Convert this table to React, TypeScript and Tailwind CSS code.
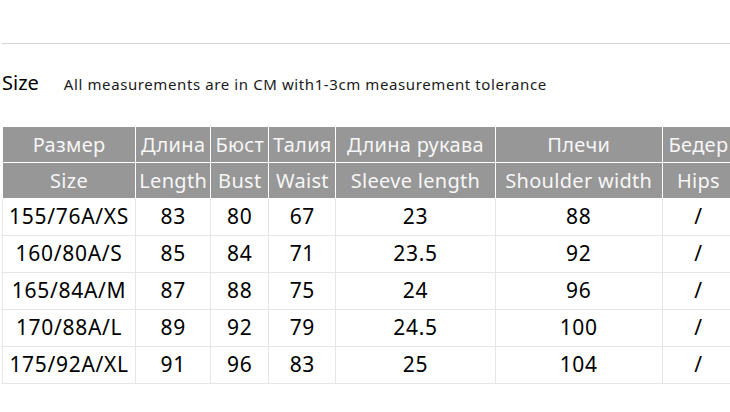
const columns = [
  { ru: "Размер", en: "Size", w: 133 },
  { ru: "Длина", en: "Length", w: 75 },
  { ru: "Бюст", en: "Bust", w: 58 },
  { ru: "Талия", en: "Waist", w: 67 },
  { ru: "Длина рукава", en: "Sleeve length", w: 159 },
  { ru: "Плечи", en: "Shoulder width", w: 167 },
  { ru: "Бедер", en: "Hips", w: 72 },
];

const rows = [
  ["155/76A/XS", "83", "80", "67", "23", "88", "/"],
  ["160/80A/S", "85", "84", "71", "23.5", "92", "/"],
  ["165/84A/M", "87", "88", "75", "24", "96", "/"],
  ["170/88A/L", "89", "92", "79", "24.5", "100", "/"],
  ["175/92A/XL", "91", "96", "83", "25", "104", "/"],
];

export default function App() {
  return (
    <div
      className="w-[730px] h-[412px] overflow-hidden bg-white text-black"
      style={{ fontFamily: '"Noto Sans", "Open Sans", sans-serif' }}
    >
      <div className="h-[43px]" />
      <div className="ml-[2px] h-px bg-[#d4d4d4]" />

      {/* title line */}
      <div className="flex items-baseline h-[82px] pt-[29px] pl-[2px]">
        <span className="text-[20px] leading-none">Size</span>
        <span className="ml-[25px] text-[15px] leading-none tracking-[0.6px] text-[#1a1a1a]">
          All measurements are in CM with1-3cm measurement tolerance
        </span>
      </div>

      {/* size table */}
      <div className="pl-[2px]">
        <table className="table-fixed border-collapse w-[733px]">
          <colgroup>
            {columns.map((c) => (
              <col key={c.en} style={{ width: c.w }} />
            ))}
          </colgroup>
          <thead>
            <tr className="h-[36px]">
              {columns.map((c) => (
                <th
                  key={c.ru}
                  className="bg-[#979797] border border-white text-[#f6f6f6] font-normal text-[20px] tracking-[0.3px] p-0 whitespace-nowrap"
                >
                  {c.ru}
                </th>
              ))}
            </tr>
            <tr className="h-[36px]">
              {columns.map((c) => (
                <th
                  key={c.en}
                  className="bg-[#979797] border border-white text-[#f6f6f6] font-normal text-[20px] tracking-[0.3px] p-0 whitespace-nowrap"
                >
                  {c.en}
                </th>
              ))}
            </tr>
          </thead>
          <tbody>
            {rows.map((r) => (
              <tr key={r[0]} className="h-[37px]">
                {r.map((v, i) => (
                  <td
                    key={i}
                    className="border border-[#e6e6e6] text-center text-[21px] tracking-[0.7px] p-0 whitespace-nowrap"
                  >
                    {v}
                  </td>
                ))}
              </tr>
            ))}
          </tbody>
        </table>
      </div>
    </div>
  );
}
